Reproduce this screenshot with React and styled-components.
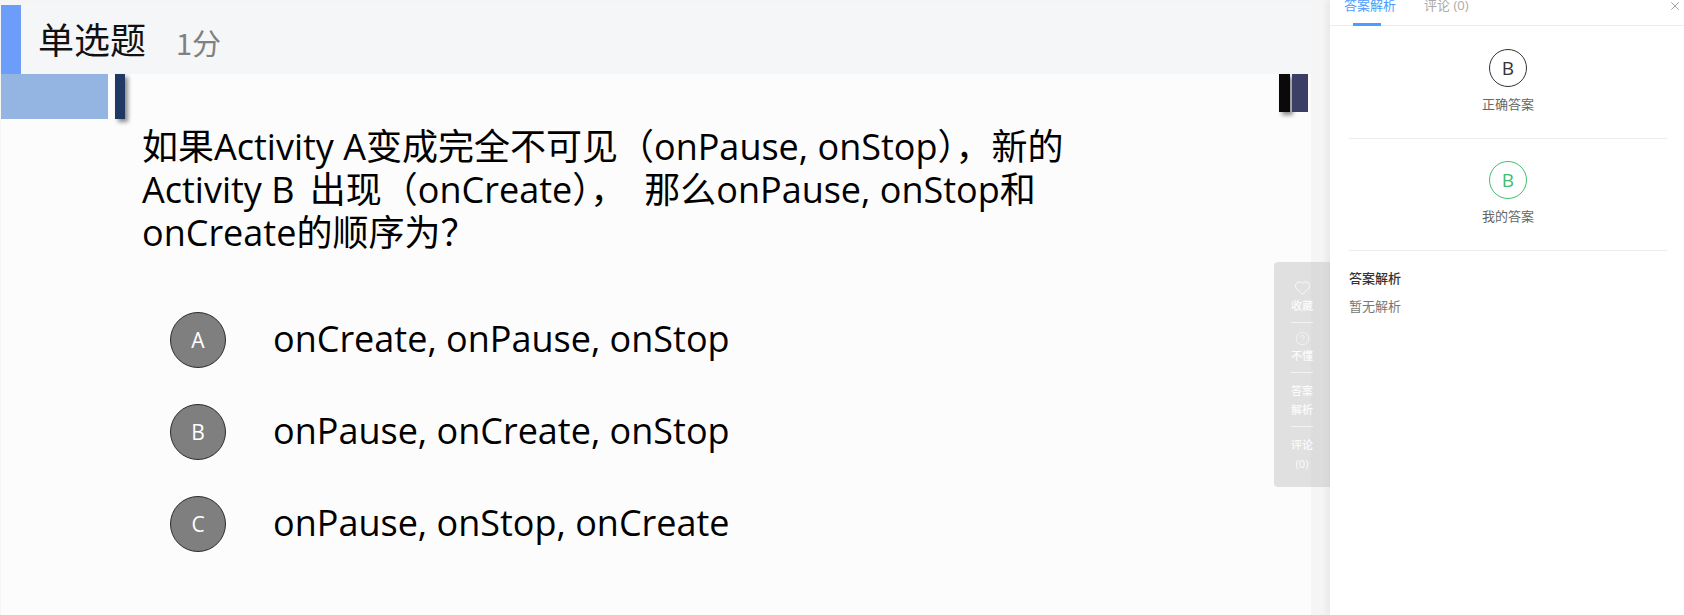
import React from 'react';
import styled, { createGlobalStyle } from 'styled-components';
import { Heart, CircleHelp, X } from 'lucide-react';

const GlobalStyle = createGlobalStyle`
  html, body {
    margin: 0;
    padding: 0;
    height: 615px;
    overflow: hidden;
    background: #f5f5f5;
    font-family: "Open Sans", "Noto Sans CJK SC", sans-serif;
  }
`;

const Page = styled.div`
  position: relative;
  display: flex;
  width: 1684px;
  height: 615px;
  overflow: hidden;
`;

const Stage = styled.div`
  width: 1330px;
  padding: 5px 19px 0 1px;
  box-sizing: border-box;
`;

const Slide = styled.div`
  height: 610px;
  background: #fcfcfc;
`;

const SlideHeader = styled.div`
  display: flex;
  align-items: center;
  height: 69px;
  background: #f5f6f8;
`;

const HeaderMark = styled.div`
  width: 20px;
  height: 100%;
  background: #6c9dfa;
`;

const HeaderTitle = styled.div`
  margin-left: 17px;
  margin-bottom: 4px;
  font-size: 36px;
  color: #111;
  font-family: "Noto Sans CJK SC", sans-serif;
`;

const HeaderScore = styled.div`
  margin-left: 30px;
  margin-top: 5px;
  font-size: 29px;
  color: #808080;
  font-family: "Noto Sans CJK SC", sans-serif;
`;

const DecorRow = styled.div`
  display: flex;
  justify-content: space-between;
  align-items: flex-start;
  height: 45px;
`;

const DecorGroup = styled.div`
  display: flex;
  gap: ${props => props.gap}px;
`;

const DecorBlock = styled.div`
  width: ${props => props.w}px;
  height: ${props => props.h}px;
  background: ${props => props.color};
  box-shadow: ${props => props.shadow ? '3px 3px 4px rgba(0,0,0,.45)' : 'none'};
`;

const RightDecor = styled(DecorGroup)`
  margin-right: 3px;
`;

const Question = styled.div`
  margin: 6px 0 0 141px;
  width: 960px;
  font-size: 36px;
  line-height: 43px;
  color: #000;
`;

const Spaced = styled.span`
  margin-right: ${props => props.w}px;
`;

const OptionList = styled.div`
  display: flex;
  flex-direction: column;
  gap: 36px;
  margin: 58px 0 0 169px;
`;

const OptionRow = styled.div`
  display: flex;
  align-items: center;
`;

const OptionBadge = styled.div`
  width: 56px;
  height: 56px;
  box-sizing: border-box;
  border: 1px solid #2b2b2b;
  border-radius: 50%;
  background: #7f7f7f;
  color: #fff;
  display: flex;
  align-items: center;
  justify-content: center;
  font-size: 21px;
`;

const OptionText = styled.div`
  margin-left: 47px;
  margin-bottom: 4px;
  font-size: 36px;
  color: #000;
`;

const Panel = styled.div`
  width: 354px;
  height: 615px;
  background: #fff;
  box-shadow: -4px 0 6px rgba(0,0,0,.05);
  position: relative;
  color: #666;
`;

const Tabs = styled.div`
  display: flex;
  gap: 28px;
  height: 26px;
  padding-left: 14px;
  border-bottom: 1px solid #ececec;
  box-sizing: border-box;
  font-size: 13px;
  line-height: 11px;
`;

const Tab = styled.div`
  position: relative;
  color: ${props => props.active ? '#4e9bff' : '#aaa'};
  &::after {
    content: '';
    display: ${props => props.active ? 'block' : 'none'};
    position: absolute;
    left: 9px;
    right: 15px;
    bottom: -1px;
    height: 3px;
    background: #4e9bff;
  }
`;

const CloseButton = styled.div`
  position: absolute;
  top: -1px;
  right: 2px;
  color: #999;
  display: flex;
`;

const AnswerBlock = styled.div`
  margin: 0 17px 0 19px;
  height: ${props => props.h}px;
  padding-top: ${props => props.top}px;
  box-sizing: border-box;
  border-bottom: 1px solid #ececec;
  display: flex;
  flex-direction: column;
  align-items: center;
`;

const AnswerCircle = styled.div`
  width: 38px;
  height: 38px;
  box-sizing: border-box;
  border-radius: 50%;
  border: 1px solid ${props => props.green ? '#3fbf6f' : '#333'};
  color: ${props => props.green ? '#3fbf6f' : '#333'};
  display: flex;
  align-items: center;
  justify-content: center;
  font-size: 19px;
`;

const AnswerLabel = styled.div`
  margin-top: 8px;
  font-size: 13px;
  line-height: 18px;
  color: #666;
`;

const Analysis = styled.div`
  margin: 18px 0 0 19px;
`;

const AnalysisTitle = styled.div`
  font-size: 13px;
  line-height: 18px;
  font-weight: 500;
  color: #333;
`;

const AnalysisBody = styled.div`
  margin-top: 10px;
  font-size: 13px;
  line-height: 18px;
  color: #777;
`;

const SideBar = styled.div`
  position: absolute;
  left: 1274px;
  top: 262px;
  width: 56px;
  height: 225px;
  background: rgba(190,190,190,.45);
  border-radius: 4px 0 0 4px;
  display: flex;
  flex-direction: column;
  align-items: center;
  color: #fbfbfb;
  font-size: 11px;
  line-height: 19px;
  font-weight: 500;
  padding-top: 17px;
  box-sizing: border-box;
`;

const SideItem = styled.div`
  display: flex;
  flex-direction: column;
  align-items: center;
  width: 22px;
  padding-bottom: 7px;
  margin-bottom: 8px;
  border-bottom: ${props => props.last ? 'none' : '1px solid rgba(255,255,255,.6)'};
`;

const options = [
  { key: 'A', text: 'onCreate, onPause, onStop' },
  { key: 'B', text: 'onPause, onCreate, onStop' },
  { key: 'C', text: 'onPause, onStop, onCreate' },
];

export default function App() {
  return (
    <Page>
      <GlobalStyle />
      <Stage>
        <Slide>
          <SlideHeader>
            <HeaderMark />
            <HeaderTitle>单选题</HeaderTitle>
            <HeaderScore>1分</HeaderScore>
          </SlideHeader>
          <DecorRow>
            <DecorGroup gap={7}>
              <DecorBlock w={107} h={45} color="#94b4e2" />
              <DecorBlock w={10} h={45} color="#1f3864" shadow />
            </DecorGroup>
            <RightDecor gap={2}>
              <DecorBlock w={11} h={38} color="#0a0a0a" shadow />
              <DecorBlock w={16} h={38} color="#3b3f66" />
            </RightDecor>
          </DecorRow>
          <Question>
            如果Activity A变成完全不可见（onPause, onStop），新的
            <br />
            <Spaced w={6}>Activity B </Spaced>出现（onCreate）<Spaced w={18}>，</Spaced>那么onPause, onStop和
            <br />
            onCreate的顺序为？
          </Question>
          <OptionList>
            {options.map(o => (
              <OptionRow key={o.key}>
                <OptionBadge>{o.key}</OptionBadge>
                <OptionText>{o.text}</OptionText>
              </OptionRow>
            ))}
          </OptionList>
        </Slide>
      </Stage>
      <Panel>
        <Tabs>
          <Tab active>答案解析</Tab>
          <Tab>评论 (0)</Tab>
        </Tabs>
        <CloseButton><X size={14} strokeWidth={1.5} /></CloseButton>
        <AnswerBlock h={113} top={23}>
          <AnswerCircle>B</AnswerCircle>
          <AnswerLabel>正确答案</AnswerLabel>
        </AnswerBlock>
        <AnswerBlock h={112} top={22}>
          <AnswerCircle green>B</AnswerCircle>
          <AnswerLabel>我的答案</AnswerLabel>
        </AnswerBlock>
        <Analysis>
          <AnalysisTitle>答案解析</AnalysisTitle>
          <AnalysisBody>暂无解析</AnalysisBody>
        </Analysis>
      </Panel>
      <SideBar>
        <SideItem>
          <Heart size={17} strokeWidth={1.2} />
          <span>收藏</span>
        </SideItem>
        <SideItem>
          <CircleHelp size={15} strokeWidth={1} />
          <span>不懂</span>
        </SideItem>
        <SideItem>
          <span>答案</span>
          <span>解析</span>
        </SideItem>
        <SideItem last>
          <span>评论</span>
          <span>(0)</span>
        </SideItem>
      </SideBar>
    </Page>
  );
}
